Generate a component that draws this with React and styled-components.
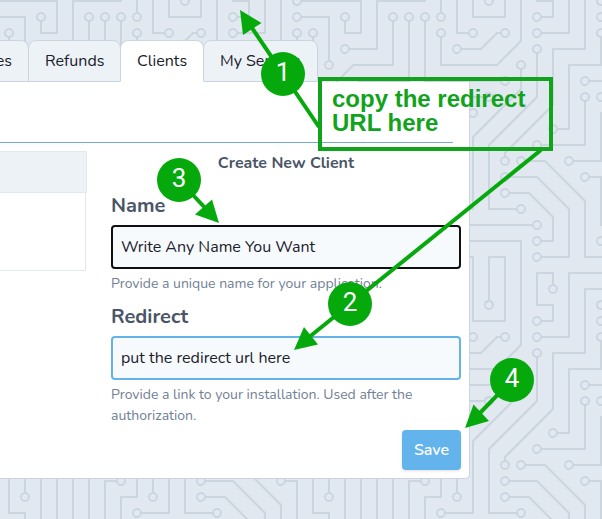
import React from 'react';
import styled, { createGlobalStyle, css } from 'styled-components';

const GlobalStyle = createGlobalStyle`
  *, *::before, *::after { box-sizing: border-box; }
  body { margin: 0; font-family: Nunito, Lato, sans-serif; font-size: 16px; color: #1a202c; }
`;

const green = '#06a90c';
const line = '#cbd5e0';

const Page = styled.div`
  position: relative;
  width: 602px;
  height: 519px;
  overflow: hidden;
  background: #e1e8f0;
`;

const Layer = styled.svg`
  position: absolute;
  inset: 0;
  display: block;
`;

const Content = styled.main`
  position: relative;
  width: 470px;
  padding-top: 40px;
`;

const Tabs = styled.nav`
  display: flex;
  height: 42px;
`;

const Tab = styled.div`
  flex: none;
  display: flex;
  align-items: center;
  justify-content: ${(p) => (p.$cut ? 'flex-end' : 'flex-start')};
  width: ${(p) => p.$width}px;
  margin-left: ${(p) => (p.$cut ? 0 : -1)}px;
  padding: ${(p) => (p.$cut ? '0 16px 0 0' : '0 0 0 16px')};
  border: 1px solid ${line};
  border-left-width: ${(p) => (p.$cut ? 0 : 1)}px;
  border-radius: ${(p) => (p.$cut ? '0 8px 0 0' : '8px 8px 0 0')};
  background: #edf2f7;
  white-space: nowrap;
  ${(p) => p.$active && css`
    position: relative;
    background: #fff;
    border-bottom-color: #fff;
  `}
`;

const Card = styled.section`
  height: 397px;
  border: solid ${line};
  border-width: 0 1px 1px 0;
  border-radius: 0 0 5px 0;
  background: #fff;
  padding-right: 8px;
`;

const CardHeader = styled.header`
  height: 61px;
  margin-right: 8px;
  border-bottom: 1px solid #74a9d0;
`;

const Columns = styled.div`
  display: grid;
  grid-template-columns: 87px 350px;
  column-gap: 24px;
  padding-top: 8px;
`;

const TableHead = styled.div`
  height: 42px;
  border: 1px solid #e2e8f0;
  border-left: 0;
  background: #edf2f7;
`;

const TableBody = styled.div`
  height: 78px;
  margin-right: 1px;
  border: solid #e2e8f0;
  border-width: 0 1px 1px 0;
`;

const Form = styled.form`
  display: flex;
  flex-direction: column;
`;

const FormTitle = styled.h2`
  margin: 0 0 19px;
  font-size: 16px;
  line-height: 24px;
  font-weight: 700;
  text-align: center;
  color: #4a5568;
`;

const Label = styled.label`
  font-size: 20px;
  line-height: 24px;
  font-weight: 700;
  color: #4a5568;
  margin-bottom: 7px;
`;

const Input = styled.input`
  width: 350px;
  height: 44px;
  padding: 0 8px;
  border: 2px solid ${(p) => (p.$focused ? '#101014' : '#63b3e8')};
  border-radius: 4px;
  outline: none;
  background: #f7fafc;
  color: #1a202c;
  font: inherit;
`;

const Hint = styled.p`
  margin: 4px 0 ${(p) => p.$after}px;
  font-size: 14px;
  line-height: 21px;
  color: #718096;
`;

const SaveButton = styled.button`
  align-self: flex-end;
  width: 59px;
  height: 40px;
  padding: 0;
  border: 0;
  border-radius: 4px;
  background: #63b3ed;
  box-shadow: 0 1px 3px rgba(0, 0, 0, 0.12);
  color: #fff;
  font: inherit;
  font-weight: 600;
`;

const Note = styled.div`
  position: absolute;
  left: 318px;
  top: 77px;
  width: 235px;
  height: 74px;
  padding: 6px 0 0 10px;
  border: 4px solid #10a31b;
  color: #10a31b;
  font: bold 24px/24px "Liberation Sans", Arial, sans-serif;
  white-space: pre-line;
`;

const StepNumber = styled.text`
  fill: #fff;
  font: 400 26px Roboto, sans-serif;
  text-anchor: middle;
`;

const TILE = 304;

const traces =
  'M44.1 224a5 5 0 1 1 0 2H0v-2h44.1zm160 48a5 5 0 1 1 0 2H82v-2h122.1zm57.8-46a5 5 0 1 1 0-2H304v2h-42.1zm0 16a5 5 0 1 1 0-2H304v2h-42.1zm6.2-114a5 5 0 1 1 0 2h-86.2a5 5 0 1 1 0-2h86.2zm-256-48a5 5 0 1 1 0 2H0v-2h12.1zm185.8 34a5 5 0 1 1 0-2h86.2a5 5 0 1 1 0 2h-86.2zM258 12.1a5 5 0 1 1-2 0V0h2v12.1zm-64 208a5 5 0 1 1-2 0v-54.2a5 5 0 1 1 2 0v54.2zm48-198.2V80h62v2h-64V21.9a5 5 0 1 1 2 0zm16 16V64h46v2h-48V37.9a5 5 0 1 1 2 0zm-128 96V208h16v12.1a5 5 0 1 1-2 0V210h-16v-76.1a5 5 0 1 1 2 0zm-5.9-21.9a5 5 0 1 1 0 2H114v48H85.9a5 5 0 1 1 0-2H112v-48h12.1zm-6.2 130a5 5 0 1 1 0-2H176v-74.1a5 5 0 1 1 2 0V242h-60.1zm-16-64a5 5 0 1 1 0-2H114v48h10.1a5 5 0 1 1 0 2H112v-48h-10.1zM66 284.1a5 5 0 1 1-2 0V274H50v30h-2v-32h18v12.1zM236.1 176a5 5 0 1 1 0 2H226v94h48v32h-2v-30h-48v-98h12.1zm25.8-30a5 5 0 1 1 0-2H274v44.1a5 5 0 1 1-2 0V146h-10.1zm-64 96a5 5 0 1 1 0-2H208v-80h16v-14h-42.1a5 5 0 1 1 0-2H226v18h-16v80h-12.1zm86.2-210a5 5 0 1 1 0 2H272V0h2v32h10.1zM98 101.9V146H53.9a5 5 0 1 1 0-2H96v-42.1a5 5 0 1 1 2 0zM53.9 34a5 5 0 1 1 0-2H80V0h2v34H53.9zm60.1 3.9V66H82v64H69.9a5 5 0 1 1 0-2H80V64h32V37.9a5 5 0 1 1 2 0zM101.9 82a5 5 0 1 1 0-2H128V37.9a5 5 0 1 1 2 0V82h-28.1zm16-64a5 5 0 1 1 0-2H146v44.1a5 5 0 1 1-2 0V18h-26.1zm102.2 270a5 5 0 1 1 0 2H98v14h-2v-16h124.1zM242 149.9V160h16v34h-16v62h48v48h-2v-46h-48v-66h16v-30h-16v-12.1a5 5 0 1 1 2 0zM53.9 18a5 5 0 1 1 0-2H64V2H48V0h18v18H53.9zm112 32a5 5 0 1 1 0-2H192V0h50v2h-48v48h-28.1zm-48-48a5 5 0 0 1-9.8-2h2.07a3 3 0 1 0 5.66 0H178v34h-18V21.9a5 5 0 1 1 2 0V32h14V2h-58.1zm0 96a5 5 0 1 1 0-2H137l32-32h39V21.9a5 5 0 1 1 2 0V66h-40.17l-32 32H117.9zm28.1 90.1a5 5 0 1 1-2 0v-76.51L175.59 80H224V21.9a5 5 0 1 1 2 0V82h-49.59L146 112.41v75.69zm16 32a5 5 0 1 1-2 0v-99.51L184.59 96H300.1a5 5 0 0 1 3.9-3.9v2.07a3 3 0 0 0 0 5.66v2.07a5 5 0 0 1-3.9-3.9H185.41L162 121.41v98.69zm-144-64a5 5 0 1 1-2 0v-3.51l48-48V48h32V0h2v50H66v55.41l-48 48v2.69zM50 53.9v43.51l-48 48V208h26.1a5 5 0 1 1 0 2H0v-65.41l48-48V53.9a5 5 0 1 1 2 0zm-16 16V89.41l-34 34v-2.82l32-32V69.9a5 5 0 1 1 2 0zM12.1 32a5 5 0 1 1 0 2H9.41L0 43.41V40.6L8.59 32h3.51zm265.8 18a5 5 0 1 1 0-2h18.69l7.41-7.41v2.82L297.41 50H277.9zm-16 160a5 5 0 1 1 0-2H288v-71.41l16-16v2.82l-14 14V210h-28.1zm-208 32a5 5 0 1 1 0-2H64v-22.59L40.59 194H21.9a5 5 0 1 1 0-2H41.41L66 216.59V242H53.9zm150.2 14a5 5 0 1 1 0 2H96v-56.6L56.6 162H37.9a5 5 0 1 1 0-2h19.5L98 200.6V256h106.1zm-150.2 2a5 5 0 1 1 0-2H80v-46.59L48.59 178H21.9a5 5 0 1 1 0-2H49.41L82 208.59V258H53.9zM34 39.8v1.61L9.41 66H0v-2h8.59L32 40.59V0h2v39.8zM2 300.1a5 5 0 0 1 3.9 3.9H3.83A3 3 0 0 0 0 302.17V256h18v48h-2v-46H2v42.1zM34 241v63h-2v-62H0v-2h34v1zM17 18H0v-2h16V0h2v18h-1zm273-2h14v2h-16V0h2v16zm-32 273v15h-2v-14h-14v14h-2v-16h18v1zM0 92.1A5.02 5.02 0 0 1 6 97a5 5 0 0 1-6 4.9v-2.07a3 3 0 1 0 0-5.66V92.1zM80 272h2v32h-2v-32zm37.9 32h-2.07a3 3 0 0 0-5.66 0h-2.07a5 5 0 0 1 9.8 0zM5.9 0A5.02 5.02 0 0 1 0 5.9V3.83A3 3 0 0 0 3.83 0H5.9zm294.2 0h2.07A3 3 0 0 0 304 3.83V5.9a5 5 0 0 1-3.9-5.9zm3.9 300.1v2.07a3 3 0 0 0-1.83 1.83h-2.07a5 5 0 0 1 3.9-3.9z';

// Solder point centres inside one tile of the board.
const points = [
  [49, 225], [209, 273], [257, 225], [257, 241], [273, 129], [177, 129], [17, 81], [193, 113],
  [289, 113], [257, 17], [193, 225], [193, 161], [241, 17], [257, 33], [129, 129], [145, 225],
  [129, 113], [81, 161], [113, 241], [177, 161], [97, 177], [129, 225], [65, 289], [241, 177],
  [257, 145], [273, 193], [193, 241], [177, 145], [289, 33], [97, 97], [49, 145], [49, 33],
  [113, 33], [65, 129], [97, 81], [129, 33], [113, 17], [145, 65], [225, 289], [241, 145],
  [49, 17], [161, 49], [161, 17], [113, 97], [209, 17], [145, 193], [225, 17], [161, 225],
  [17, 161], [49, 49], [33, 209], [33, 65], [17, 33], [273, 49], [257, 209], [49, 241],
  [17, 193], [209, 257], [33, 161], [49, 257], [17, 177],
];

function CircuitBackground() {
  return (
    <Layer width="602" height="519" aria-hidden="true">
      <defs>
        <pattern id="circuit" x="184" y="0" width={TILE} height={TILE} patternUnits="userSpaceOnUse">
          <path d={traces} fill={line} />
          {points.map(([x, y]) => (
            <circle key={`${x}-${y}`} cx={x} cy={y} r="3" fill="#e1e8f0" />
          ))}
        </pattern>
      </defs>
      <rect width="602" height="519" fill="url(#circuit)" />
    </Layer>
  );
}

const steps = [
  { n: 1, at: [283, 74], from: [319, 127], to: [250, 25], head: '240,10 261.5,23 243,35' },
  { n: 2, at: [350, 304], from: [541, 150], to: [308, 338], head: '294,350 304,327 318,344.5' },
  { n: 3, at: [179, 180], from: [179, 180], to: [207, 210], head: '219,223 212,199.5 195,214.5' },
  { n: 4, at: [512, 380], from: [512, 380], to: [478, 415], head: '465,428 473.5,404.5 489,421' },
];

function Annotations() {
  return (
    <>
      <Layer width="602" height="519">
        {steps.map(({ n, at, from, to, head }) => (
          <g key={n} fill={green}>
            <line x1={from[0]} y1={from[1]} x2={to[0]} y2={to[1]} stroke={green} strokeWidth="4" />
            <polygon points={head} />
            <circle cx={at[0]} cy={at[1]} r="22" />
            <StepNumber x={at[0]} y={at[1] + 7}>{n}</StepNumber>
          </g>
        ))}
      </Layer>
      <Note>{'copy the redirect\nURL here'}</Note>
    </>
  );
}

export default function App() {
  return (
    <Page>
      <GlobalStyle />
      <CircuitBackground />
      <Content>
        <Tabs>
          <Tab $cut $width={29}>es</Tab>
          <Tab $width={93}>Refunds</Tab>
          <Tab $width={84} $active>Clients</Tab>
          <Tab $width={115}>My Servers</Tab>
        </Tabs>
        <Card>
          <CardHeader />
          <Columns>
            <div>
              <TableHead />
              <TableBody />
            </div>
            <Form>
              <FormTitle>Create New Client</FormTitle>
              <Label htmlFor="name">Name</Label>
              <Input id="name" $focused defaultValue="Write Any Name You Want" />
              <Hint $after={11}>Provide a unique name for your application.</Hint>
              <Label htmlFor="redirect">Redirect</Label>
              <Input id="redirect" defaultValue="put the redirect url here" />
              <Hint $after={4}>
                Provide a link to your installation. Used after the authorization.
              </Hint>
              <SaveButton type="button">Save</SaveButton>
            </Form>
          </Columns>
        </Card>
      </Content>
      <Annotations />
    </Page>
  );
}
